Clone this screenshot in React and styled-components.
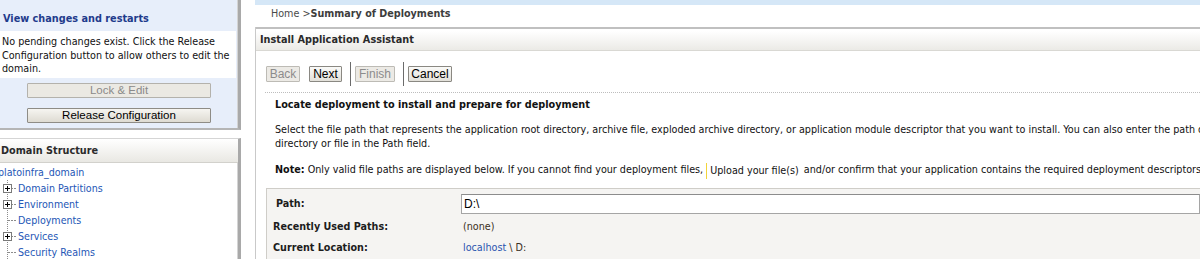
import React from 'react';
import styled, { createGlobalStyle } from 'styled-components';

const GlobalStyle = createGlobalStyle`
    body {
        margin:0;
        background:#fff;
        font-family:"DejaVu Sans Condensed", "DejaVu Sans", sans-serif;
        font-size:10.7px;
        color:#222;
        overflow:hidden;
    }
`

const Page = styled.div`
    display:flex;
    align-items:flex-start;
    width:1200px;
    height:259px;
    overflow:hidden;
`

const Sidebar = styled.div`
    width:241px;
    flex-shrink:0;
    display:flex;
    flex-direction:column;
`

const ChangeCenter = styled.div`
    height:130px;
    background-color:#e7eefa;
    border-right:3px solid #a9a9a9;
    border-bottom:2px solid #b5b5b5;
    box-shadow:inset -1px 0 0 #d4d4d4;
    padding-top:10px;
    box-sizing:border-box;
    display:flex;
    flex-direction:column;
    align-items:center;
`

const PanelTitle = styled.div`
    align-self:stretch;
    height:21px;
    line-height:17px;
    padding-left:3px;
    font-size:10.8px;
    font-weight:bold;
    color:#1f3b8c;
`

const Notice = styled.div`
    align-self:stretch;
    margin-right:2px;
    background:#fff;
    padding:4px 2px 2px;
    font-size:10.7px;
    line-height:13.5px;
    color:#111;
    white-space:nowrap;
`

const WideButton = styled.button`
    width:184px;
    height:15px;
    margin-top:${p => p.$top}px;
    padding:0;
    font-family:"Liberation Sans", Arial, sans-serif;
    font-size:11.5px;
    line-height:13px;
    color:${p => p.disabled ? '#8a8a8a' : '#000'};
    background:${p => p.disabled ? '#ebe9e3' : 'linear-gradient(#f6f5f1, #dedbd2)'};
    border:1px solid ${p => p.disabled ? '#b4b2ac' : '#8e8c86'};
    border-radius:1px;
`

const DomainPanel = styled.div`
    margin-top:8px;
    border-top:1px solid #d5d5d5;
    border-right:3px solid #a9a9a9;
    box-shadow:inset -1px 0 0 #d4d4d4;
    height:130px;
    overflow:hidden;
`

const PanelHeader = styled.div`
    height:23px;
    line-height:23px;
    padding-left:1px;
    background:linear-gradient(#ffffff, #e9e8e3);
    border-bottom:1px solid #d2d1cc;
    font-size:10.8px;
    font-weight:bold;
    color:#2b2b2b;
`

const Tree = styled.div`
    padding-top:1px;
    font-size:10.6px;
`

const TreeRow = styled.div`
    display:flex;
    align-items:center;
    height:16px;
`

const TreeLink = styled.a`
    color:#2456b6;
    text-decoration:none;
    margin-left:${p => p.$root ? '-2px' : '0'};
    white-space:nowrap;
`

const Branch = ({ expandable }) => (
    <svg width="18" height="16" viewBox="0 0 18 16" style={{ flexShrink: 0 }}>
        <line x1="7.5" y1="0" x2="7.5" y2="16" stroke="#8c8c8c" strokeDasharray="1 1" />
        <line x1="8" y1="8.5" x2="17" y2="8.5" stroke="#8c8c8c" strokeDasharray="2 1" />
        {expandable && (
            <g>
                <rect x="3.5" y="4.5" width="8" height="8" fill="#fff" stroke="#7a7a7a" />
                <line x1="5" y1="8.5" x2="10" y2="8.5" stroke="#000" />
                <line x1="7.5" y1="6" x2="7.5" y2="11" stroke="#000" />
            </g>
        )}
    </svg>
)

const Main = styled.div`
    flex:1;
    margin-left:14px;
    display:flex;
    flex-direction:column;
    min-width:0;
`

const TopStrip = styled.div`
    height:5px;
    background:#d5e7f7;
`

const Breadcrumb = styled.div`
    height:22px;
    line-height:18px;
    padding-left:16px;
    color:#4a4a4a;
    & b {
        color:#3d3d3d;
    }
`

const Content = styled.div`
    border-left:1px solid #c9c9c9;
    height:240px;
`

const AssistantHeader = styled.div`
    height:21px;
    line-height:21px;
    border-top:2px solid #c0c0c0;
    border-bottom:1px solid #d9d8d3;
    background:linear-gradient(#ffffff 10%, #ebeae6);
    padding-left:4px;
    font-size:10.8px;
    font-weight:bold;
    color:#2a2a2a;
`

const ButtonBar = styled.div`
    display:flex;
    align-items:center;
    height:24px;
    margin-top:11px;
    padding-left:10px;
`

const NavButton = styled.button`
    width:${p => p.$w}px;
    height:16px;
    padding:0;
    margin-right:${p => p.$gap}px;
    font-family:"Liberation Sans", Arial, sans-serif;
    font-size:12px;
    line-height:13px;
    color:${p => p.disabled ? '#8c8c8c' : '#000'};
    background:${p => p.disabled ? '#eceae5' : 'linear-gradient(#fafaf8, #e2e0d9)'};
    border:1px solid ${p => p.disabled ? '#bdbbb5' : '#8a8882'};
    border-radius:1px;
`

const Divider = styled.div`
    width:1px;
    height:24px;
    background:#6b6b6b;
    margin-right:4px;
`

const Section = styled.div`
    margin:6px 0 0 9px;
    border-top:1px dotted #bdbdbd;
    padding-left:10px;
    color:#111;
`

const Heading = styled.div`
    margin-top:5px;
    font-size:10.8px;
    font-weight:bold;
    line-height:14px;
`

const Paragraph = styled.p`
    margin:11px 0 0;
    line-height:14px;
    white-space:nowrap;
`

const Note = styled.p`
    margin:11px 0 0;
    line-height:16px;
    white-space:nowrap;
`

const UploadTip = styled.span`
    display:inline-block;
    border-left:1px solid #f2d43a;
    padding:0 2px 0 3px;
    line-height:16px;
    vertical-align:top;
    margin-top:1px;
`

const FormBox = styled.div`
    margin:9px 0 0 -9px;
    border:1px solid #cfcdc8;
    border-right:none;
    background:#f5f4f2;
    padding:3px 0 4px 6px;
    display:grid;
    grid-template-columns:188px 1fr;
    align-items:center;
`

const Label = styled.div`
    font-weight:bold;
    font-size:10.7px;
    padding-left:${p => p.$indent || 0}px;
    height:${p => p.$h}px;
    line-height:${p => p.$h}px;
    color:#1c1c1c;
`

const Value = styled.div`
    height:${p => p.$h}px;
    line-height:${p => p.$h}px;
    padding-left:2px;
    color:#3b2f22;
`

const PathInput = styled.input`
    width:100%;
    height:20px;
    box-sizing:border-box;
    border:1px solid #a5a5a5;
    border-top-color:#8c8c8c;
    padding:0 2px;
    font-family:"Liberation Sans", Arial, sans-serif;
    font-size:12px;
    color:#000;
    outline:none;
`

const Crumb = styled.a`
    color:#2b55b0;
    text-decoration:none;
`

const treeItems = [
    { label: "Domain Partitions", expandable: true },
    { label: "Environment", expandable: true },
    { label: "Deployments", expandable: false },
    { label: "Services", expandable: true },
    { label: "Security Realms", expandable: false },
]

const App = () => {
    return (
        <Page>
            <GlobalStyle />
            <Sidebar>
                <ChangeCenter>
                    <PanelTitle>View changes and restarts</PanelTitle>
                    <Notice>
                        No pending changes exist. Click the Release<br />
                        Configuration button to allow others to edit the<br />
                        domain.
                    </Notice>
                    <WideButton disabled $top={5}>Lock &amp; Edit</WideButton>
                    <WideButton $top={10}>Release Configuration</WideButton>
                </ChangeCenter>
                <DomainPanel>
                    <PanelHeader>Domain Structure</PanelHeader>
                    <Tree>
                        <TreeRow><TreeLink $root>platoinfra_domain</TreeLink></TreeRow>
                        {treeItems.map(item => (
                            <TreeRow key={item.label}>
                                <Branch expandable={item.expandable} />
                                <TreeLink>{item.label}</TreeLink>
                            </TreeRow>
                        ))}
                    </Tree>
                </DomainPanel>
            </Sidebar>
            <Main>
                <TopStrip />
                <Breadcrumb>Home &gt;<b>Summary of Deployments</b></Breadcrumb>
                <Content>
                    <AssistantHeader>Install Application Assistant</AssistantHeader>
                    <ButtonBar>
                        <NavButton disabled $w={34} $gap={9}>Back</NavButton>
                        <NavButton $w={33} $gap={8}>Next</NavButton>
                        <Divider />
                        <NavButton disabled $w={40} $gap={8}>Finish</NavButton>
                        <Divider />
                        <NavButton $w={44} $gap={0}>Cancel</NavButton>
                    </ButtonBar>
                    <Section>
                        <Heading>Locate deployment to install and prepare for deployment</Heading>
                        <Paragraph>
                            Select the file path that represents the application root directory, archive file, exploded archive directory, or application module descriptor that you want to install. You can also enter the path of a<br />
                            directory or file in the Path field.
                        </Paragraph>
                        <Note>
                            <b>Note:</b> Only valid file paths are displayed below. If you cannot find your deployment files, <UploadTip>Upload your file(s)</UploadTip> and/or confirm that your application contains the required deployment descriptors.
                        </Note>
                        <FormBox>
                            <Label $indent={3} $h={24}>Path:</Label>
                            <PathInput defaultValue="D:\" />
                            <Label $h={22}>Recently Used Paths:</Label>
                            <Value $h={22}>(none)</Value>
                            <Label $h={20}>Current Location:</Label>
                            <Value $h={20}><Crumb>localhost</Crumb> \ D:</Value>
                        </FormBox>
                    </Section>
                </Content>
            </Main>
        </Page>
    );
}

export default App;
